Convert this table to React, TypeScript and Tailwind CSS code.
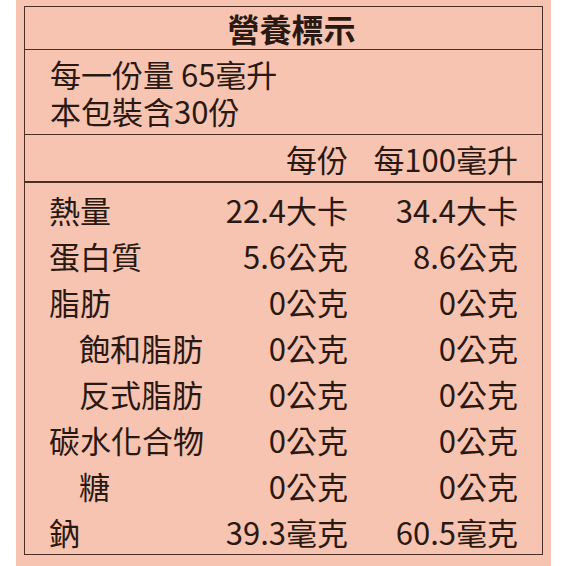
import React from 'react';

type Row = { label: string; perServing: string; per100: string; indent?: boolean };

const rows: Row[] = [
  { label: '熱量', perServing: '22.4大卡', per100: '34.4大卡' },
  { label: '蛋白質', perServing: '5.6公克', per100: '8.6公克' },
  { label: '脂肪', perServing: '0公克', per100: '0公克' },
  { label: '飽和脂肪', perServing: '0公克', per100: '0公克', indent: true },
  { label: '反式脂肪', perServing: '0公克', per100: '0公克', indent: true },
  { label: '碳水化合物', perServing: '0公克', per100: '0公克' },
  { label: '糖', perServing: '0公克', per100: '0公克', indent: true },
  { label: '鈉', perServing: '39.3毫克', per100: '60.5毫克' },
];

const App = () => {
  return (
    <div className="h-[566px] w-[566px] overflow-hidden bg-white font-['Noto_Sans_CJK_TC','Noto_Sans_CJK_SC',sans-serif] text-[#2a1812]">
      <div className="ml-[16px] h-full w-[535px] bg-[#f6c4b1] px-[8px] pt-[6px]">
        <div className="flex flex-col border-[1.5px] border-[#4b2f27]">
          {/* Title */}
          <div className="flex h-[43px] items-center justify-center border-b-[1.5px] border-[#4b2f27] pl-[16px]">
            <h1 className="text-[32px] font-bold leading-none">營養標示</h1>
          </div>

          {/* Serving info */}
          <div className="h-[85px] border-b-[1.5px] border-[#4b2f27] pl-[25px] pt-[6px] text-[31px] leading-[36.5px] whitespace-nowrap">
            <p>每一份量 65毫升</p>
            <p>本包裝含30份</p>
          </div>

          {/* Column headers */}
          <div className="flex h-[48px] items-center border-b-2 border-[#4b2f27] pl-[24px] pr-[24px] text-[31px] leading-none whitespace-nowrap">
            <span className="flex-1" />
            <span className="w-[150px] shrink-0 text-right">每份</span>
            <span className="w-[170px] shrink-0 text-right">每100毫升</span>
          </div>

          {/* Nutrient rows */}
          <div className="pt-[3px]">
            {rows.map((row) => (
              <div key={row.label} className="flex h-[46px] items-center pl-[24px] pr-[24px] text-[31px] leading-none whitespace-nowrap">
                <span className={row.indent ? 'min-w-0 flex-1 pl-[30px]' : 'min-w-0 flex-1'}>{row.label}</span>
                <span className="w-[150px] shrink-0 text-right">{row.perServing}</span>
                <span className="w-[170px] shrink-0 text-right">{row.per100}</span>
              </div>
            ))}
          </div>
        </div>
      </div>
    </div>
  );
};

export default App;
